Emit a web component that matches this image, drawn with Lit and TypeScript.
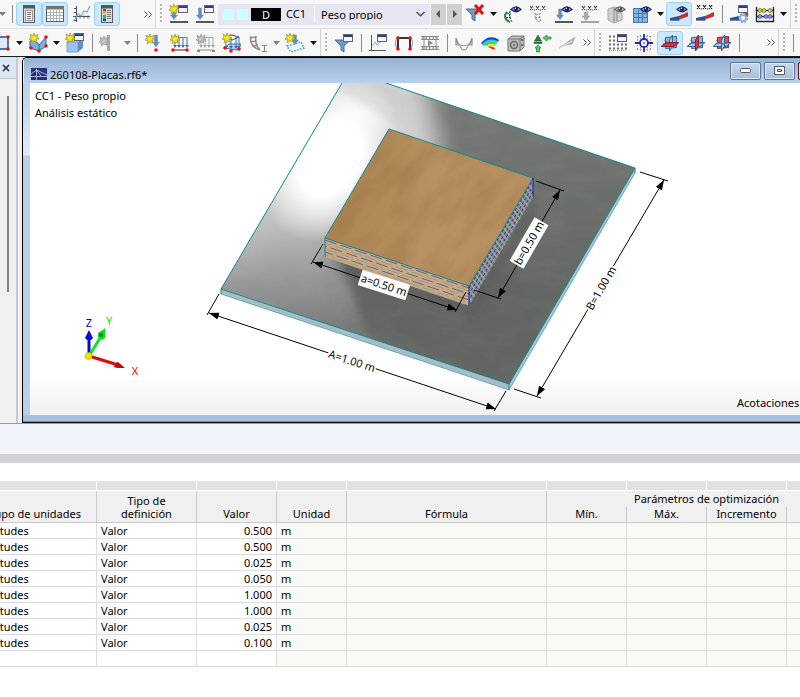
import { LitElement, html, svg, css, nothing, type TemplateResult, type SVGTemplateResult } from "lit";
import { customElement, property } from "lit/decorators.js";

/* ---------- shared icon parts, drawn on a 20 x 20 grid ---------- */

const star = (x: number, y: number, dull = false) => svg`
  <g transform="translate(${x} ${y})">
    <path d="M0-5 1-2 4-4 3-1 5 1 2 1 3 4 0 3-3 5-2 2-5 1-3-1-4-4-1-2Z"
      fill=${dull ? "#b9b9b9" : "#e8d92a"} stroke=${dull ? "#989898" : "#a89a3c"} stroke-width="0.8"/>
    <circle r="1.8" fill=${dull ? "#c8c8c8" : "#fff200"}/>
  </g>`;

const pane = (x: number, y: number, w = 9, h = 7) => svg`
  <rect x=${x + 0.5} y=${y + 0.5} width=${w} height=${h} fill="#f4f5f8" stroke="#63666d"/>
  <rect x=${x + 1} y=${y + 1} width=${w - 1} height="2" fill="#2b3b9c"/>`;

const eye = (x: number, y: number, dull = false) => svg`
  <g transform="translate(${x} ${y})">
    <path d="M-5 0.500Q0-5 5 0.500Q0 5-5 0.500Z" fill=${dull ? "#d0d0d0" : "#aab2dc"} stroke=${dull ? "#666" : "#22245c"} stroke-width="1.200"/>
    <circle r="2.300" fill=${dull ? "#555" : "#1b2170"}/>
    <circle cx="-0.600" cy="-0.800" r="0.700" fill="#fff"/>
  </g>`;

const down = (x: number, y: number, len: number, fill = "#5b8fcc") => svg`
  <path d="M${x - 1.5} ${y}h3v${len - 5}h2l-3.500 4.500-3.500-4.500h2Z" fill=${fill} stroke="#6a7f9c" stroke-width="0.400"/>`;

const thin = (x: number, y: number, len: number, fill: string) => svg`
  <path d="M${x - 0.5} ${y}h1v${len - 3}h1.500l-2 3-2-3h1.500Z" fill=${fill}/>`;

const marks = (x: number, y: number, color = "#444") => svg`
  <path d="M${x} ${y}l3 4m0-4l-3 4M${x + 6} ${y}l3 4m0-4l-3 4M${x + 12} ${y}l3 4m0-4l-3 4" stroke=${color} stroke-width="1.100" fill="none"/>
  <path d="M${x + 4} ${y + 4}h1m5 0h1" stroke=${color}/>`;

const wedge = (y: number) => svg`
  <path d="M1 ${y + 3}L10 ${y + 1}V${y + 5}H1Z" fill="#2155a8"/>
  <path d="M10 ${y + 1}L19 ${y - 3}V${y + 1}L10 ${y + 4}Z" fill="#d32a1c"/>
  <path d="M1 ${y + 5.500}H10V${y + 4.500}L19 ${y + 1}" stroke="#383a42" fill="none" stroke-width="0.600"/>`;

const dot = (x: number, y: number) => svg`<circle cx=${x} cy=${y} r="1.800" fill="#e11"/>`;

const planes = (red: "h" | "v" | "b") => {
  const back = svg`<path d="M5.500 4.500l11-1v11l-11 1Z" fill=${red === "b" ? "#e8485a" : "#8fb9e2"} stroke=${red === "b" ? "#9c2434" : "#3c6694"}/>`;
  const flat = svg`<path d="M1 13.500l5-4h13l-5 4Z" fill=${red === "h" ? "#ea2c40" : "#a9c8ea"} stroke=${red === "h" ? "#8c1c2c" : "#3c6694"}/>`;
  const wall = svg`<path d="M9.500 7l3-5v11l-3 5Z" fill=${red === "v" ? "#ea2c40" : "#a9c8ea"} stroke=${red === "v" ? "#8c1c2c" : "#3c6694"}/>`;
  return svg`
    ${back}${red === "h" ? svg`${wall}${flat}` : svg`${flat}${wall}`}
    <path d="M4 7l13 8M3 10.500h15" stroke="#3f5f86" stroke-width="0.600"/>`;
};

const loads = (dull: boolean) => svg`
  ${[5, 9, 13, 17].map((x) => thin(x, 4, 11, dull ? "#a5a5a5" : "#3f72b2"))}
  <path d="M5 4.500h12" stroke=${dull ? "#a5a5a5" : "#5d88bc"}/>
  <path d="M2 17h16" stroke=${dull ? "#888" : "#333"}/>
  ${dull ? svg`<path d="M1 18h3m12 0h3" stroke="#888" stroke-width="2"/>` : svg`${dot(3, 17)}${dot(17, 17)}`}
  ${star(5, 6, dull)}`;

const icons: Record<string, SVGTemplateResult> = {
  navigator: svg`<rect x="4.500" y="1.500" width="11" height="17" fill="#ddd" stroke="#5d5d5d"/>
    <path d="M4 3h12" stroke="#555" stroke-width="3"/><rect x="6.500" y="6.500" width="7" height="10" fill="#fff" stroke="#999"/>
    <path d="M8 8.500h4m-4 2h4m-4 2h4m-4 2h4" stroke="#777"/>`,
  table: svg`<rect x="1.500" y="2.500" width="17" height="15" fill="#fff" stroke="#5d5d5d"/>
    <path d="M1 4h18" stroke="#777" stroke-width="3"/><path d="M2 8.500h16m-16 3h16m-16 3h16M5.500 6v11m3-11v11m3-11v11m3-11v11" stroke="#b4b4b4"/>`,
  graph: svg`<path d="M5.500 2v16M2 12.500h17" stroke="#555" fill="none"/><path d="M3 17L7 10l3 2 3-5 3 1 3-6" stroke="#6ea4dc" fill="none" stroke-width="1.200"/>
    <path d="M3 4.500h2m-2 4h2m-2 8h2m4-5v3m4-3v3m4-3v3" stroke="#555"/>`,
  panel: svg`<rect x="4.500" y="1.500" width="11" height="17" fill="#ddd" stroke="#5d5d5d"/><path d="M4 3h12" stroke="#555" stroke-width="3"/>
    <rect x="6" y="5" width="3" height="2" fill="#d22"/><rect x="6" y="7" width="3" height="2" fill="#e9a11b"/><rect x="6" y="9" width="3" height="2" fill="#e5e22a"/>
    <rect x="6" y="11" width="3" height="2" fill="#2fb844"/><rect x="6" y="13" width="3" height="2" fill="#2aa3d8"/><rect x="6" y="15" width="3" height="2" fill="#2738b8"/>
    <path d="M10 6.500h4m-4 2h4m-4 2h4m-4 2h4m-4 2h4" stroke="#777"/>`,
  newCase: svg`${pane(9, 1)}${down(5, 4, 12)}${star(5, 5)}<path d="M1 18h18" stroke="#222" stroke-width="1.500"/>`,
  editCase: svg`${pane(9, 1)}${down(5, 4, 12)}<path d="M1 18h18" stroke="#222" stroke-width="1.500"/>`,
  filterOff: svg`<path d="M1 5h14L10 11v6l-3-2v-4Z" fill="#6d9ad0" stroke="#4c6d99"/><path d="M10 1l8 9m0-9l-8 9" stroke="#e5120f" stroke-width="3"/>`,
  deformEye: svg`<path d="M5 8C2 11 2 16 8 18" stroke="#1c8f3c" stroke-width="2" fill="none"/><path d="M8 7c-1 4 0 8 2 11M5 9l4 1m-5 4l5-1" stroke="#222" stroke-dasharray="2 1" fill="none"/>${eye(14, 5)}`,
  values: svg`${marks(2, 2)}<path d="M8 9C6 12 7 16 12 18M12 9c-1 3 0 6 1 8M8 11l4-1m-5 4l5-1" stroke="#999" stroke-width="1.200" stroke-dasharray="2 1" fill="none"/>`,
  loadEye: svg`${down(6, 5, 11)}${eye(13, 5)}<path d="M1 18h18" stroke="#222" stroke-width="1.500"/>`,
  loadValues: svg`${marks(2, 2)}${down(6, 8, 9, "#aaa")}<path d="M1 18h18" stroke="#888" stroke-width="1.500"/>`,
  solidEye: svg`<path d="M2 5l6-2 8 1v12l-8 3-6-3Z" fill="#cfcfcf" stroke="#aaa"/><path d="M8 4v14M11 5v12" stroke="#aaa" stroke-width="2"/>${eye(14, 5, true)}`,
  meshEye: svg`<rect x="1.500" y="4.500" width="14" height="14" fill="#86b3e0" stroke="#4176ae"/><path d="M2 9.500h13M2 13.500h13M6.500 5v13m4-13v13" stroke="#4176ae"/>${eye(14, 5)}`,
  resultEye: svg`${wedge(11)}${eye(13, 5)}`,
  resultValues: svg`${marks(2, 1, "#111")}${wedge(11)}`,
  resultSet: svg`${wedge(11)}${pane(9, 1)}<circle cx="14" cy="14" r="4" fill="#fff"/><circle cx="14" cy="14" r="3" fill="none" stroke="#8db0f0" stroke-width="2"/><circle cx="14" cy="14" r="4.500" fill="none" stroke="#5b83d6" stroke-dasharray="2 1.500"/>`,
  abacus: svg`<path d="M1.500 3v15M18.500 3v15M1 6.500h18M1 12.500h18M1 17.500h18" stroke="#222" stroke-width="1.300"/>
    <g fill="#d8c850" stroke="#6e6420" stroke-width="0.700"><circle cx="5" cy="6.500" r="2"/><circle cx="9" cy="6.500" r="2"/><circle cx="15" cy="6.500" r="2"/></g>
    <g fill="#8b93ea" stroke="#363c96" stroke-width="0.700"><circle cx="5" cy="12.500" r="2"/><circle cx="11" cy="12.500" r="2"/><circle cx="15" cy="12.500" r="2"/></g>`,
  surface: svg`<path d="M3 4h14v12H3" fill="#dfe9f5" stroke="#4c78b0" stroke-width="2"/>${dot(17, 4)}${dot(17, 16)}`,
  newSurface: svg`<path d="M2 8q7-1 9 4l7-8v9l-7 5-9-3Z" fill="#7eaee0" stroke="#416d9e"/><path d="M11 12v5" stroke="#416d9e"/>${dot(3, 15)}${dot(11, 18)}${dot(18, 4)}${dot(18, 13)}${star(6, 5)}`,
  newSolid: svg`<path d="M2 9l4-3h12l-4 3Z" fill="#cfe3f7" stroke="#7fa3c8"/><path d="M2 9h11v10H2Z" fill="#9cc3ec" stroke="#7fa3c8"/><path d="M13 9l5-3v9l-5 4Z" fill="#5d90c6"/>${pane(9, 0)}${star(5, 5)}`,
  support: svg`<path d="M8 2h3v16H8Z" fill="#aaa"/>${star(5, 8, true)}`,
  nodalLoad: svg`${thin(12, 2, 12, "#3f72b2")}${down(12, 2, 12)}${star(6, 6)}${dot(12, 17)}`,
  memberLoad: loads(false),
  lineLoad: loads(true),
  surfaceLoad: svg`<path d="M2 15l5-4h12l-4 6Z" fill="#b8d4f2" stroke="#44709e"/>${[4, 9, 14, 17].map((x) => thin(x, 4, 12, "#3f72b2"))}<path d="M4 4l6-2 7 2-7 3Z" fill="none" stroke="#2f5584"/>${dot(3, 15)}${dot(9, 18)}${dot(17, 16)}${star(5, 5)}`,
  imperfection: svg`<path d="M3 3C1 9 5 15 12 17M8 3c-1 6 0 10 4 14M2 5l6-1m-6 5l6-1m-4 5l6-1" stroke="#8d8d8d" stroke-width="1.500" fill="none"/><path d="M14 12.500h5m-5 6h5m-2.500-6v6" stroke="#888"/>`,
  freeLoad: svg`<path d="M2 13l14-4 3 6-13 4Z" fill="#f3f8fe" stroke="#2e9bd6" stroke-width="1.500" stroke-dasharray="1.500 1.500"/>${down(10, 2, 10)}${star(5, 5)}`,
  filterSet: svg`<path d="M1 7h15l-6 6v6l-3-2v-4Z" fill="#6d9ad0" stroke="#4c6d99"/>${pane(9, 1)}`,
  diagram: svg`<path d="M3.500 2v16M1 17.500h17" stroke="#555"/><path d="M4 13l3-4 2 3 4-4" stroke="#79b0e6" fill="none"/>${pane(9, 1)}`,
  frame: svg`<path d="M4 5h12M4 5v12M16 5v12" stroke="#333" stroke-width="2" fill="none"/><path d="M4 3C1 7 1 12 3 16M16 3c3 4 3 9 1 13" stroke="#888" fill="none"/>${dot(4, 5)}${dot(16, 5)}${dot(4, 16)}${dot(16, 16)}`,
  film: svg`<path d="M1 3.500h18m-18 13h18M1 6.500h18m-18 7h18M4 3v14M16 3v14" stroke="#8b8b8b" fill="none"/><path d="M8 7l5 3-5 3Z" fill="#8b8b8b"/><path d="M2 5h17m-17 10h17" stroke="#999" stroke-width="2" stroke-dasharray="1.500 2"/>`,
  moment: svg`<path d="M2 5V12H6M18 5V12H14M2 5C3 9 5 12 6 12Q7 17 10 17T14 12C15 12 17 9 18 5" stroke="#8a8a8a" stroke-width="1.200" fill="none"/><path d="M5 12.500h10" stroke="#aaa"/>`,
  contour: svg`<path d="M1 10C7 3 14 3 19 7l-1 2C13 6 7 7 3 12Z" fill="#163fe0"/><path d="M2 11C7 5 13 6 18 8l-1 2c-4-2-9-2-13 3Z" fill="#27c8e8"/><path d="M4 12c4-4 9-4 13-2l-1 2c-4-2-7-1-10 1Z" fill="#47d838"/><path d="M6 13c3-2 6-2 10-1l-1 2c-3-1-5-1-7 0Z" fill="#f0e224"/><path d="M8 14c2-1 5 0 7 1l-1 2c-2-1-4-2-6-3Z" fill="#ea3322"/>`,
  dice: svg`<path d="M2 6l4-3h12v11l-4 4H2Z" fill="#bdbdbd" stroke="#777"/><path d="M2 6h12v12M14 6l4-3" stroke="#777" fill="none"/><circle cx="8" cy="12" r="3.500" fill="none" stroke="#666" stroke-width="1.500"/><circle cx="8" cy="12" r="1" fill="#555"/><circle cx="16" cy="7" r="1" fill="#555"/><circle cx="16" cy="12" r="1" fill="#555"/>`,
  reaction: svg`<path d="M6 2l3.500 6h-7Z M2 9h8v1.500H2Z" fill="#2f7d45" stroke="#1d5a2e" stroke-width="0.600"/><path d="M11 5l4-3v2h4v2h-4v2Z M6 12l3 3H7.500v4h-3v-4H3Z" fill="#46d86c" stroke="#1f7d38" stroke-width="0.700"/>`,
  blade: svg`<path d="M1 15L17 4l-3 7-6 1Z" fill="#b5b5b5" stroke="#999" stroke-width="0.600"/><path d="M1 15L14 8" stroke="#e6e6e6"/>`,
  gridSet: svg`<path d="M1 3.500h18M1 7.500h18M1 11.500h18M1 15.500h18" stroke="#6d6d6d" stroke-width="2" stroke-dasharray="2 2"/><path d="M1 17.500h18" stroke="#999" stroke-dasharray="1 1"/>${pane(9, 1)}`,
  snap: svg`<path d="M3 3.500h14M3 16.500h14M3.500 3v14M16.500 3v14M6.500 2v16M13.500 2v16" stroke="#999" stroke-dasharray="1.500 1.500"/><circle cx="10" cy="10" r="4" fill="#fff" stroke="#1d2fae" stroke-width="1.800"/><path d="M10 1v6m0 6v6M1 10h6m6 0h6" stroke="#1d2fae" stroke-width="1.800"/><circle cx="10" cy="10" r="1.200" fill="#e88a2c"/>`,
  planeXY: planes("h"),
  planeXZ: planes("v"),
  planeYZ: planes("b"),
  clipped: svg`<path d="M3 1v18" stroke="#222" stroke-width="2"/>${dot(3, 2)}${dot(3, 17)}`,
};

/* ---------- a toolbar row ---------- */

type Tool =
  | { kind: "button"; icon: string; label: string; on?: boolean }
  | { kind: "menu" | "sep" | "more" | "grip" | "gap" | "combo" }
  | { kind: "menu"; dull: boolean };

const b = (icon: string, label: string, on = false): Tool => ({ kind: "button", icon, label, on });
const menu: Tool = { kind: "menu" };
const dullMenu: Tool = { kind: "menu", dull: true };
const sep: Tool = { kind: "sep" };
const more: Tool = { kind: "more" };
const grip: Tool = { kind: "grip" };
const gap: Tool = { kind: "gap" };
const combo: Tool = { kind: "combo" };

const topTools: Tool[] = [
  dullMenu, sep, b("navigator", "Navegador", true), b("table", "Tablas", true), b("graph", "Diagrama"), b("panel", "Panel", true),
  gap, more, grip, b("newCase", "Nuevo caso de carga"), b("editCase", "Editar caso de carga"), combo,
  b("filterOff", "Quitar filtro"), menu, b("deformEye", "Mostrar deformación"), b("values", "Valores"), b("loadEye", "Mostrar cargas"),
  b("loadValues", "Valores de carga"), b("solidEye", "Mostrar sólidos"), b("meshEye", "Mostrar malla"), menu,
  b("resultEye", "Mostrar resultados", true), b("resultValues", "Valores de resultados"), sep,
  b("resultSet", "Configurar resultados"), b("abacus", "Calcular"), menu, grip,
];

const lowTools: Tool[] = [
  b("surface", "Superficie"), menu, b("newSurface", "Nueva superficie"), menu, b("newSolid", "Nuevo sólido"), sep,
  b("support", "Apoyo"), dullMenu, sep, b("nodalLoad", "Carga nodal"), b("memberLoad", "Carga en barra"), b("lineLoad", "Carga lineal"),
  b("surfaceLoad", "Carga superficial"), b("imperfection", "Imperfección"), dullMenu, b("freeLoad", "Carga libre"), menu, grip,
  b("filterSet", "Filtro"), sep, b("diagram", "Diagrama de resultados"), b("frame", "Deformada"), b("film", "Animación"), sep,
  b("moment", "Esfuerzos"), b("contour", "Isobandas"), b("dice", "Sólidos"), b("reaction", "Reacciones"), b("blade", "Secciones"),
  more, grip, b("gridSet", "Rejilla"), b("snap", "Ajuste"), b("planeXY", "Plano XY", true), b("planeXZ", "Plano XZ"), b("planeYZ", "Plano YZ"),
  sep, gap, more, grip, sep, b("clipped", "Nudo"),
];

@customElement("tool-row")
export class ToolRow extends LitElement {
  @property({ attribute: false }) tools: Tool[] = [];

  static styles = css`
    :host { display: flex; align-items: center; background: #f7f7f7; overflow: hidden; font: 11px/16px "Noto Sans", sans-serif; box-sizing: border-box; }
    button { border: 0; padding: 0; background: none; flex: none; display: grid; place-items: center; box-sizing: border-box; height: 24px; font: inherit; color: #111; }
    svg { display: block; }
    .tool { width: 26px; }
    .on { background: #cce8ff; border: 1px solid #99d1ff; border-radius: 3px; }
    .menu { width: 11px; }
    .dull { color: #808080; }
    .sep { flex: none; width: 8px; height: 18px; background: linear-gradient(#8c8c8c, #8c8c8c) center / 1px 100% no-repeat; }
    .gap { flex: none; width: 22px; }
    .more { width: 12px; color: #444; }
    .grip { flex: none; width: 12px; height: 28px; box-sizing: border-box; display: flex; gap: 4px; padding-left: 1px; align-items: center; }
    .grip::before { content: ""; width: 1px; height: 28px; background: #d4d4d4; }
    .grip::after { content: ""; width: 2px; height: 20px; background: repeating-linear-gradient(#b5b5b5 0 2px, transparent 2px 4px); }
    .combo { flex: none; width: 244px; display: flex; align-items: center; box-sizing: border-box; gap: 1px; }
    .field { position: relative; flex: 1; height: 21px; background: #e6e6f2; display: flex; align-items: center; padding-left: 5px; gap: 3px; }
    .swatch { width: 11px; height: 11px; background: #ccffff; }
    .tag { background: #000; color: #fff; width: 30px; height: 13px; line-height: 13px; text-align: center; }
    .case { width: 25px; padding-left: 2px; }
    select { flex: 1; align-self: stretch; appearance: none; border: 0; border-left: 1px solid #fff; margin: 3px 0; padding: 0 0 2px 6px; background: none; font: inherit; color: #000; }
    .chevron { position: absolute; right: 5px; top: 7px; pointer-events: none; }
    .step { width: 15px; height: 21px; background: #d0d0d0; }
  `;

  private glyph(name: string) {
    return html`<svg width="20" height="20" viewBox="0 0 20 20" aria-hidden="true">${icons[name]}</svg>`;
  }

  private combo() {
    return html`<div class="combo">
      <div class="field">
        <span class="swatch"></span><span class="swatch"></span><span class="tag">D</span><span class="case">CC1</span>
        <select aria-label="Caso de carga"><option>Peso propio</option></select>
        <svg class="chevron" width="9" height="7" viewBox="0 0 9 7"><path d="M0.500 1l4 4 4-4" fill="none" stroke="#444" stroke-width="1.200"/></svg>
      </div>
      <button class="step" aria-label="Anterior"><svg width="5" height="8"><path d="M4 0v8L0 4Z" fill="#555"/></svg></button>
      <button class="step" aria-label="Siguiente"><svg width="5" height="8"><path d="M1 0v8l4-4Z" fill="#555"/></svg></button>
    </div>`;
  }

  private item(t: Tool): TemplateResult | typeof nothing {
    switch (t.kind) {
      case "button":
        return html`<button class="tool ${t.on ? "on" : ""}" aria-label=${t.label} aria-pressed=${t.on ? "true" : "false"}>${this.glyph(t.icon)}</button>`;
      case "menu":
        return html`<button class="menu ${"dull" in t ? "dull" : ""}" aria-label="Más opciones"><svg width="7" height="4"><path d="M0 0h7L3.500 4Z" fill="currentColor"/></svg></button>`;
      case "sep":
        return html`<span class="sep"></span>`;
      case "more":
        return html`<button class="more" aria-label="Mostrar más"><svg width="8" height="7"><path d="M0.500 0.500l3 3-3 3m4-6l3 3-3 3" fill="none" stroke="currentColor"/></svg></button>`;
      case "grip":
        return html`<span class="grip"></span>`;
      case "gap":
        return html`<span class="gap"></span>`;
      case "combo":
        return this.combo();
    }
  }

  render() {
    return this.tools.map((t) => this.item(t));
  }
}

/* ---------- the 3D view ---------- */

const steps = (n: number) => Array.from({ length: n }, (_, i) => i);

@customElement("model-view")
export class ModelView extends LitElement {
  static styles = css`
    :host { position: relative; display: block; overflow: hidden; background: linear-gradient(#fff 88%, #f0f0f0); font: 11px/17px "Noto Sans", sans-serif; color: #000; }
    .scene { display: block; }
    .info { position: absolute; left: 5px; top: 4px; }
    .legend { position: absolute; left: 707px; bottom: 4px; white-space: nowrap; }
    .dim { font: 11px "Noto Sans", sans-serif; text-anchor: middle; }
    .axis { font: 11px "Noto Sans", sans-serif; text-anchor: middle; }
    .rule { stroke: #000; stroke-width: 1; fill: none; }
    .edge { stroke: #14888a; stroke-width: 1; fill: none; }
  `;

  private dimension(x1: number, y1: number, x2: number, y2: number) {
    return svg`<line class="rule" x1=${x1} y1=${y1} x2=${x2} y2=${y2} marker-start="url(#tip)" marker-end="url(#tip)"/>`;
  }

  private label(x: number, y: number, angle: number, text: string, halfWidth: number) {
    return svg`<g transform="translate(${x} ${y}) rotate(${angle})">
      <rect x=${-halfWidth} y="-8" width=${halfWidth * 2} height="16" fill="#fff"/>
      <text class="dim" y="4">${text}</text></g>`;
  }

  render() {
    return html`
      <svg class="scene" width="770" height="332" viewBox="30 83 770 332" role="img" aria-label="Modelo 3D con acotaciones">
        <defs>
          <marker id="tip" viewBox="0 0 10 8" refX="10" refY="4" markerWidth="10" markerHeight="8" markerUnits="userSpaceOnUse" orient="auto-start-reverse"><path d="M0 0.500L10 4 0 7.500Z"/></marker>
          <linearGradient id="steel" gradientUnits="userSpaceOnUse" x1="290" y1="170" x2="310" y2="330">
            <stop offset="0" stop-color="#d4d5d4"/><stop offset="0.300" stop-color="#c0c1c0"/><stop offset="0.650" stop-color="#989a99"/><stop offset="1" stop-color="#7b7d7c"/>
          </linearGradient>
          <linearGradient id="dark" gradientUnits="userSpaceOnUse" x1="470" y1="110" x2="500" y2="370">
            <stop offset="0" stop-color="#757875"/><stop offset="0.500" stop-color="#696c69"/><stop offset="1" stop-color="#5f6360"/>
          </linearGradient>
          <radialGradient id="glare" gradientUnits="userSpaceOnUse" cx="0" cy="0" r="1" gradientTransform="translate(330 158) rotate(-62) scale(88 64)">
            <stop offset="0" stop-color="#fff"/><stop offset="0.450" stop-color="#fff"/><stop offset="1" stop-color="#fff" stop-opacity="0"/>
          </radialGradient>
          <radialGradient id="halo" gradientUnits="userSpaceOnUse" cx="0" cy="0" r="1" gradientTransform="translate(360 112) rotate(20) scale(100 42)">
            <stop offset="0" stop-color="#f4f4f4" stop-opacity="0.900"/><stop offset="0.300" stop-color="#dcdcdc" stop-opacity="0.700"/><stop offset="1" stop-color="#aaa" stop-opacity="0"/>
          </radialGradient>
          <linearGradient id="wood" gradientUnits="userSpaceOnUse" x1="340" y1="190" x2="520" y2="230">
            <stop offset="0" stop-color="#ad8453"/><stop offset="0.500" stop-color="#b89263"/><stop offset="1" stop-color="#b68f61"/>
          </linearGradient>
          <filter id="grain" x="0" y="0" width="1" height="1" color-interpolation-filters="sRGB">
            <feTurbulence type="fractalNoise" baseFrequency="0.020 0.050" numOctaves="4" seed="4"/>
            <feColorMatrix values="0 0 0 0 0.520  0 0 0 0 0.370  0 0 0 0 0.200  2.200 0 0 0 -0.850"/>
          </filter>
          <filter id="brushed" x="0" y="0" width="1" height="1" color-interpolation-filters="sRGB">
            <feTurbulence type="fractalNoise" baseFrequency="0.030 0.060" numOctaves="4" seed="9"/>
            <feColorMatrix values="0 0 0 0 1  0 0 0 0 1  0 0 0 0 1  1.200 0 0 0 -0.450"/>
          </filter>
          <filter id="haze"><feGaussianBlur stdDeviation="4"/></filter>
          <filter id="wide" x="-0.300" y="-0.300" width="1.600" height="1.600"><feGaussianBlur stdDeviation="12"/></filter>
          <clipPath id="plate"><path d="M221 289L342 83H386L635 168 509 384Z"/></clipPath>
          <clipPath id="board"><path d="M389 129L533 178 469 286 325 238Z"/></clipPath>
          <clipPath id="front"><path d="M325 238L469 286V306L325 257Z"/></clipPath>
          <clipPath id="side"><path d="M469 286L533 178V197L469 306Z"/></clipPath>
        </defs>

        <path d="M221 289L509 384V390L221 294Z" fill="#a9bcc4"/>
        <path d="M509 384L635 168V173L509 390Z" fill="#a8c4d4"/>
        <path class="edge" d="M221 294L509 390 635 173" stroke-opacity="0.550"/>
        <g clip-path="url(#plate)">
          <rect x="215" y="80" width="425" height="310" fill="url(#steel)"/>
          <path d="M420 60L660 150V420H460L366 332 345 250 440 160Z" fill="url(#dark)" filter="url(#wide)"/>
          <path d="M338 255L372 338 480 420H560L520 280 400 240Z" fill="#626562" filter="url(#haze)"/>
          <rect x="215" y="80" width="425" height="310" fill="url(#halo)"/>
          <rect x="215" y="80" width="425" height="310" fill="url(#glare)"/>
          <rect x="215" y="80" width="425" height="310" filter="url(#brushed)" opacity="0.080"/>
          <path d="M346 88L400 122" stroke="#9a9a9a" stroke-width="3" stroke-opacity="0.350" fill="none" filter="url(#haze)"/>
          <path d="M325 257L469 306 533 197 540 212 474 316 345 276Z" fill="#444" fill-opacity="0.250" filter="url(#haze)"/>
        </g>
        <path class="edge" d="M342 83L221 289 509 384 635 168 386 83M509 384V390M221 289V294M635 168V173"/>

        <path d="M389 129L533 178 469 286 325 238Z" fill="url(#wood)"/>
        <g clip-path="url(#board)"><rect x="300" y="60" width="270" height="290" transform="rotate(-48 430 208)" filter="url(#grain)" opacity="0.260"/></g>
        <path d="M325 238L469 286V306L325 257Z" fill="#cda87c"/>
        <g clip-path="url(#front)">
          ${steps(8).map((i) => svg`<path d="M${325} ${240 + i * 3}l144 48" stroke=${i % 2 ? "#6cae9c" : "#6c5c94"} stroke-width="1" stroke-dasharray="12 4" stroke-dashoffset=${i * 5}/>`)}
        </g>
        <path d="M469 286L533 178V197L469 306Z" fill="#b39c8e"/>
        <g clip-path="url(#side)">
          ${steps(10).map((i) => svg`<path d="M469 ${288 + i * 3}l64 -108" stroke=${i % 2 ? "#3f9c96" : "#453b98"} stroke-width="1.200" stroke-dasharray="3 2" stroke-dashoffset=${i * 3}/>`)}
        </g>
        <path class="edge" d="M325 238L389 129 533 178 469 286ZM325 238V257"/>
        <path d="M469 286V306M533 178V197" stroke="#1c1ca8"/>

        <path class="rule" d="M219 294L207 315M506 391L494 411M640 172L668 181M514 389L541 398M323 244L311 264M466 292L455 312M536 181L564 191M474 290L501 299"/>
        ${this.dimension(209, 313, 496, 409)}
        ${this.dimension(664, 180, 537, 396)}
        ${this.dimension(313, 262, 457, 310)}
        ${this.dimension(560, 190, 498, 298)}
        ${this.label(352, 361, 18, "A=1.00 m", 25)}
        ${this.label(601, 288, -60, "B=1.00 m", 25)}
        ${this.label(384, 285, 18, "a=0.50 m", 25)}
        ${this.label(529, 243, -60, "b=0.50 m", 25)}

        <path d="M89 356V340" stroke="#0808c8" stroke-width="3"/><path d="M89 330l4 8-2 2h-4l-2-2Z" fill="#0808d8"/>
        <path d="M89 356L100 338" stroke="#08e820" stroke-width="3"/><path d="M105.500 328L98 333l0 4 4 3 3-2Z" fill="#04e01c"/><circle cx="101" cy="335" r="2" fill="#0a8a1c"/>
        <path d="M89 356L115 364" stroke="#e00808" stroke-width="3"/><path d="M125 368l-7-6-3 1-1 4 3 1Z" fill="#c80808"/>
        <circle cx="88.500" cy="356" r="3.500" fill="#f0e400" stroke="#a89e00" stroke-width="0.500"/>
        <text class="axis" x="89" y="327" fill="#0000f0">Z</text>
        <text class="axis" x="109" y="325" fill="#00e820">Y</text>
        <text class="axis" x="135" y="375" fill="#f00000">X</text>
      </svg>
      <div class="info">CC1 - Peso propio<br/>Análisis estático</div>
      <div class="legend">Acotaciones</div>
    `;
  }
}

/* ---------- the page ---------- */

const values = ["0.500", "0.500", "0.025", "0.050", "1.000", "1.000", "0.025", "0.100"];

@customElement("app-root")
export class AppRoot extends LitElement {
  static styles = css`
    :host { display: block; overflow: hidden; min-height: 100vh; background: #fff; font: 11px/15px "Noto Sans", sans-serif; color: #000; }
    .bars { display: flex; flex-direction: column; gap: 1px; background: #dedede; border-bottom: 1px solid #1d1d1d; overflow: hidden; }
    .top { margin-left: -3px; min-width: 0; height: 28px; }
    .low { margin-left: -12px; min-width: 0; height: 27px; }

    .work { display: flex; background: #f0f0f0; border-bottom: 1px solid #9c9c9c; }
    .dock { flex: none; width: 18px; box-sizing: border-box; border-right: 2px solid #c8c8d2; background: #f0f0f0; }
    .dock-head { background: #d9e6f5; height: 21px; border-bottom: 1px solid #c5c5cc; display: flex; justify-content: flex-end; align-items: center; padding-right: 6px; }
    .dock-head button, .wbtn { border: 0; padding: 0; background: none; display: grid; place-items: center; }
    .thumb { width: 2px; height: 196px; margin: 17px 0 0 7px; background: #828282; }
    svg { display: block; }

    .mdi { flex: 1; min-width: 0; overflow: hidden; margin-left: 4px; }
    .window { box-sizing: border-box; border-left: 1px solid #000; border-top: 1px solid #000; border-bottom: 1px solid #111; border-radius: 5px 0 0 0; background: #a9c1de; overflow: hidden; }
    .title { display: flex; align-items: center; height: 25px; width: calc(100% + 29px); box-sizing: border-box; background: linear-gradient(#98b3d3, #b9d1ec); padding-left: 7px; gap: 3px; border-left: 1px solid #e4eef9; }
    .title h1 { flex: 1; margin: 0; padding-top: 7px; font: inherit; }
    .logo { margin-top: 7px; }
    .wbtn { box-sizing: border-box; width: 31px; height: 18px; border: 1px solid #5d7391; border-radius: 2px; box-shadow: inset 0 0 0 1px #dde9f6; background: linear-gradient(#c6d8ec, #a6bfdb); }
    .wbtn.close { background: #b33d2e; border-color: #5d1a1a; }
    .client { display: grid; grid-template-columns: 7px minmax(0, 1fr); }
    .sill { height: 7px; box-sizing: border-box; background: #a9c1de; border-bottom: 1px solid #2fa9b8; }
    .frame { background: linear-gradient(#b9d1ec, #dfebf8 72px, #b8d0ea 73px); }

    .band { height: 30px; background: #f0f3f9; }
    .split { height: 9px; background: #d1d1d6; margin-bottom: 18px; }

    .sheet { overflow: hidden; }
    table { table-layout: fixed; border-collapse: separate; border-spacing: 0; width: 900px; min-width: 100%; margin-left: -33px; }
    .w-units { width: 130px; } .w-def { width: 100px; } .w-value { width: 80px; } .w-unit { width: 70px; } .w-formula { width: 200px; } .w-opt { width: 80px; }
    .strip td { height: 10px; padding: 0; background: #e1e1e1; border-right: 1px solid #fff; border-bottom: 1px solid #fff; box-sizing: border-box; }
    th { box-sizing: border-box; height: 16px; padding: 0; background: #f0f0f0; border-right: 1px solid #c9c9c9; border-bottom: 1px solid #c9c9c9; font-weight: 400; vertical-align: bottom; line-height: 13px; padding-bottom: 2px; }
    th.group { border-bottom: 0; padding-bottom: 2px; }
    tbody td { box-sizing: border-box; height: 16px; padding: 0 4px; border-right: 1px solid #dcdcdc; border-bottom: 1px solid #dcdcdc; line-height: 15px; vertical-align: top; }
    .num { text-align: right; }
    .off { background: #f9faf3; }
  `;

  private row(value: string | null) {
    return html`<tr>
      <td>${value ? "Longitudes" : nothing}</td>
      <td>${value ? "Valor" : nothing}</td>
      <td class="num">${value ?? nothing}</td>
      <td class="off">${value ? "m" : nothing}</td>
      <td class="off"></td><td class="off"></td><td class="off"></td><td class="off"></td><td class="off"></td>
    </tr>`;
  }

  render() {
    return html`
      <header class="bars">
        <tool-row class="top" .tools=${topTools}></tool-row>
        <tool-row class="low" .tools=${lowTools}></tool-row>
      </header>

      <main class="work">
        <aside class="dock">
          <div class="dock-head"><button aria-label="Cerrar panel"><svg width="8" height="8"><path d="M1 1l6 6m0-6L1 7" stroke="#333" stroke-width="1.700"/></svg></button></div>
          <div class="thumb"></div>
        </aside>
        <div class="mdi">
          <section class="window">
            <div class="title">
              <svg class="logo" width="16" height="12" viewBox="0 0 16 12"><path d="M0 0h16v12H0Z" fill="#27307a"/><path d="M0 8.500h16M5.500 1v11M0 6L5.500 2 16 7M5.500 2L10 8" stroke="#c8d0ee" stroke-width="0.800" fill="none"/></svg>
              <h1>260108-Placas.rf6*</h1>
              <button class="wbtn" aria-label="Minimizar"><svg width="11" height="5"><rect x="0.500" y="0.500" width="10" height="4" rx="1" fill="#fff" stroke="#555a66"/></svg></button>
              <button class="wbtn" aria-label="Restaurar"><svg width="11" height="9"><path d="M0.500 0.500h10v8h-10ZM3.500 3.500v2h4v-2Z" fill="#fff" fill-rule="evenodd" stroke="#555a66"/></svg></button>
              <button class="wbtn close" aria-label="Cerrar"></button>
            </div>
            <div class="client"><span class="frame"></span><model-view></model-view></div>
            <div class="sill"></div>
          </section>
        </div>
      </main>

      <div class="band"></div>
      <div class="split"></div>

      <div class="sheet">
        <table>
          <colgroup>
            <col class="w-units"/><col class="w-def"/><col class="w-value"/><col class="w-unit"/><col class="w-formula"/>
            <col class="w-opt"/><col class="w-opt"/><col class="w-opt"/><col class="w-opt"/>
          </colgroup>
          <thead>
            <tr class="strip">${steps(9).map(() => html`<td></td>`)}</tr>
            <tr>
              <th rowspan="2">Grupo de unidades</th><th rowspan="2">Tipo de<br/>definición</th><th rowspan="2">Valor</th>
              <th rowspan="2">Unidad</th><th rowspan="2">Fórmula</th><th class="group" colspan="4">Parámetros de optimización</th>
            </tr>
            <tr><th>Mín.</th><th>Máx.</th><th>Incremento</th><th></th></tr>
          </thead>
          <tbody>${values.map((v) => this.row(v))}${this.row(null)}</tbody>
        </table>
      </div>
    `;
  }
}
